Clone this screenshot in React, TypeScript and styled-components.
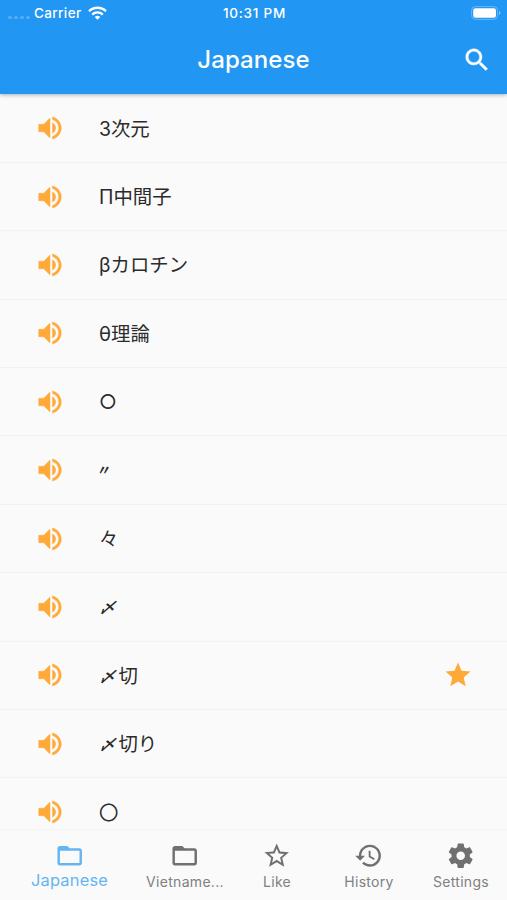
import React from "react";
import styled, { createGlobalStyle } from "styled-components";

const GlobalStyle = createGlobalStyle`
  * { box-sizing: border-box; }
  body { margin: 0; background: #fafafa; }
`;

const Screen = styled.div`
  display: flex;
  flex-direction: column;
  width: 507px;
  height: 900px;
  overflow: hidden;
  background: #fafafa;
  font-family: Inter, "Noto Sans CJK JP", sans-serif;
`;

const Header = styled.header`
  flex: none;
  height: 93.5px;
  background: #2196f3;
  color: #fff;
  box-shadow: 0 1px 4px rgba(0, 0, 0, 0.3);
  z-index: 1;
`;

const StatusBar = styled.div`
  display: grid;
  grid-template-columns: 1fr auto 1fr;
  align-items: center;
  height: 26px;
  padding: 0 6px 0 8px;
  font-size: 13.5px;
  font-weight: 500;
`;

const Carrier = styled.div`
  display: flex;
  align-items: center;
  letter-spacing: 0.38px;
  svg { display: block; }
`;

const Dots = styled.div`
  display: flex;
  gap: 2px;
  margin: 9px 4px 0 0;
`;

const Dot = styled.i`
  width: 4px;
  height: 3.5px;
  border-radius: 50%;
  background: #55aef6;
`;

const Wifi = styled.svg`
  margin-left: 6px;
`;

const Clock = styled.div`
  letter-spacing: 0.77px;
`;

const Battery = styled.svg`
  display: block;
  justify-self: end;
`;

const TitleBar = styled.div`
  display: grid;
  grid-template-columns: 1fr auto 1fr;
  align-items: center;
  height: 67px;
  padding: 0 15px;
`;

const Title = styled.h1`
  grid-column: 2;
  margin: 0;
  font-size: 24px;
  font-weight: 500;
  line-height: 30px;
  letter-spacing: 0.1px;
`;

const SearchButton = styled.button`
  display: flex;
  justify-self: end;
  padding: 0;
  border: 0;
  background: none;
  color: #fff;
`;

const List = styled.ul`
  flex: 1;
  min-height: 0;
  margin: 0;
  padding: 1px 0 0;
  overflow: hidden;
  list-style: none;
`;

const Row = styled.li`
  display: flex;
  align-items: center;
  height: 68.4px;
  padding: 0 34px 0 34.5px;
  border-bottom: 1px solid #f2f2f2;
  color: #ffa938;
`;

const Word = styled.span`
  flex: 1;
  margin-left: 34.5px;
  padding-top: 1px;
  font-size: 19.4px;
  line-height: 28px;
  color: #2b2b2b;
`;

const Mark = styled.span<{ $kind: "ditto" | "shime" }>`
  display: inline-block;
  ${(p) =>
    p.$kind === "ditto"
      ? "transform: translate(-4.5px, -1px) skewX(-6deg) scale(0.72, 0.7); font-weight: 700;"
      : "transform: skewX(-20deg) scale(0.82, 0.8); font-weight: 500;"}
`;

const NavBar = styled.nav`
  flex: none;
  display: grid;
  grid-template-columns: 139px repeat(4, 1fr);
  height: 71px;
  border-top: 1px solid #f5f5f5;
`;

const NavItem = styled.a<{ $active?: boolean }>`
  display: flex;
  flex-direction: column;
  align-items: center;
  padding-top: 11px;
  color: ${(p) => (p.$active ? "#64b5f0" : "#707070")};
`;

const NavLabel = styled.span<{ $active?: boolean }>`
  margin-top: ${(p) => (p.$active ? "0" : "1.6px")};
  font-size: ${(p) => (p.$active ? "16.4px" : "14px")};
  line-height: 20px;
  letter-spacing: ${(p) => (p.$active ? "0.2px" : "0.3px")};
  color: ${(p) => (p.$active ? "#64b5f0" : "#808080")};
`;

const Glyph = styled.svg<{ $weight: number }>`
  display: block;
  flex: none;
  fill: currentColor;
  stroke: currentColor;
  stroke-width: ${(p) => p.$weight};
`;

const paths = {
  volume:
    "M3 9v6h4l5 5V4L7 9H3zm13.5 3c0-1.77-1.02-3.29-2.5-4.03v8.05c1.48-.73 2.5-2.25 2.5-4.02zM14 3.23v2.06c2.89.86 5 3.54 5 6.71s-2.11 5.85-5 6.71v2.06c4.01-.91 7-4.49 7-8.77s-2.99-7.86-7-8.77z",
  star: "M12 17.27L18.18 21l-1.64-7.03L22 9.24l-7.19-.61L12 2 9.19 8.63 2 9.24l5.46 4.73L5.82 21z",
  search:
    "M15.5 14h-.79l-.28-.27C15.41 12.59 16 11.11 16 9.5 16 5.91 13.09 3 9.5 3S3 5.91 3 9.5 5.91 16 9.5 16c1.61 0 3.09-.59 4.23-1.57l.27.28v.79l5 4.99L20.49 19l-4.99-5zm-6 0C7.01 14 5 11.99 5 9.5S7.01 5 9.5 5 14 7.01 14 9.5 11.99 14 9.5 14z",
  folder:
    "M20 6h-8l-2-2H4c-1.1 0-1.99.9-1.99 2L2 18c0 1.1.9 2 2 2h16c1.1 0 2-.9 2-2V8c0-1.1-.9-2-2-2zm0 12H4V8h16v10z",
  like: "M22 9.24l-7.19-.62L12 2 9.19 8.63 2 9.24l5.46 4.73L5.82 21 12 17.27 18.18 21l-1.63-7.03L22 9.24zM12 15.4l-3.76 2.27 1-4.28-3.32-2.88 4.38-.38L12 6.1l1.71 4.04 4.38.38-3.32 2.88 1 4.28L12 15.4z",
  history:
    "M13 3c-4.97 0-9 4.03-9 9H1l3.89 3.89.07.14L9 12H6c0-3.87 3.13-7 7-7s7 3.13 7 7-3.13 7-7 7c-1.93 0-3.68-.79-4.94-2.06l-1.42 1.42C8.27 19.99 10.51 21 13 21c4.97 0 9-4.03 9-9s-4.03-9-9-9zm-1 5v5l4.28 2.54.72-1.21-3.5-2.08V8H12z",
  settings:
    "M19.43 12.98c.04-.32.07-.64.07-.98s-.03-.66-.07-.98l2.11-1.65c.19-.15.24-.42.12-.64l-2-3.46c-.12-.22-.39-.3-.61-.22l-2.49 1c-.52-.4-1.08-.73-1.69-.98l-.38-2.65C14.46 2.18 14.25 2 14 2h-4c-.25 0-.46.18-.49.42l-.38 2.65c-.61.25-1.17.59-1.69.98l-2.49-1c-.23-.09-.49 0-.61.22l-2 3.46c-.13.22-.07.49.12.64l2.11 1.65c-.04.32-.07.65-.07.98s.03.66.07.98l-2.11 1.65c-.19.15-.24.42-.12.64l2 3.46c.12.22.39.3.61.22l2.49-1c.52.4 1.08.73 1.69.98l.38 2.65c.03.24.24.42.49.42h4c.25 0 .46-.18.49-.42l.38-2.65c.61-.25 1.17-.59 1.69-.98l2.49 1c.23.09.49 0 .61-.22l2-3.46c.12-.22.07-.49-.12-.64l-2.11-1.65zM12 15.5c-1.93 0-3.5-1.57-3.5-3.5s1.57-3.5 3.5-3.5 3.5 1.57 3.5 3.5-1.57 3.5-3.5 3.5z",
};

type IconName = keyof typeof paths;

const Icon = ({ name, size = 30, weight = 0 }: { name: IconName; size?: number; weight?: number }) => (
  <Glyph width={size} height={size} $weight={weight} viewBox="0 0 24 24" aria-hidden>
    <path d={paths[name]} />
  </Glyph>
);

const words: { text: string; liked?: boolean }[] = [
  { text: "3次元" },
  { text: "Π中間子" },
  { text: "βカロチン" },
  { text: "θ理論" },
  { text: "○" },
  { text: "〃" },
  { text: "々" },
  { text: "〆" },
  { text: "〆切", liked: true },
  { text: "〆切り" },
  { text: "〇" },
];

// The iteration and closing marks are set smaller and more slanted than the kanji.
const renderWord = (text: string) => {
  if (text[0] === "〃") return <Mark $kind="ditto">{text}</Mark>;
  if (text[0] === "〆")
    return (
      <>
        <Mark $kind="shime">〆</Mark>
        {text.slice(1)}
      </>
    );
  return text;
};

const tabs: { label: string; icon: IconName; active?: boolean }[] = [
  { label: "Japanese", icon: "folder", active: true },
  { label: "Vietname...", icon: "folder" },
  { label: "Like", icon: "like" },
  { label: "History", icon: "history" },
  { label: "Settings", icon: "settings" },
];

export default function App() {
  return (
    <Screen>
      <GlobalStyle />
      <Header>
        <StatusBar>
          <Carrier>
            <Dots>
              <Dot />
              <Dot />
              <Dot />
              <Dot />
            </Dots>
            Carrier
            <Wifi width="19" height="14" viewBox="0 0 19 14" fill="none" stroke="#fff" strokeWidth="2.3">
              <path d="M1 5.2a12.2 12.2 0 0 1 17 0" />
              <path d="M4.2 8.6a7.6 7.6 0 0 1 10.6 0" />
              <path d="M9.5 13.8L6.7 11a4 4 0 0 1 5.6 0z" fill="#fff" stroke="none" />
            </Wifi>
          </Carrier>
          <Clock>10:31 PM</Clock>
          <Battery width="30" height="14" viewBox="0 0 30 14">
            <rect x="0.6" y="0.6" width="26" height="12.8" rx="3.8" fill="none" stroke="#6bb8f7" strokeWidth="1" />
            <rect x="2.2" y="2.2" width="22.8" height="9.6" rx="2.2" fill="#fff" />
            <path d="M28 5v4c1-.3 1.5-1.1 1.5-2s-.5-1.7-1.5-2z" fill="#7cc0f8" />
          </Battery>
        </StatusBar>
        <TitleBar>
          <Title>Japanese</Title>
          <SearchButton aria-label="Search">
            <Icon name="search" weight={0.3} />
          </SearchButton>
        </TitleBar>
      </Header>
      <List>
        {words.map((w) => (
          <Row key={w.text}>
            <Icon name="volume" weight={0.35} />
            <Word lang="ja">{renderWord(w.text)}</Word>
            {w.liked && <Icon name="star" />}
          </Row>
        ))}
      </List>
      <NavBar>
        {tabs.map((t) => (
          <NavItem key={t.label} $active={t.active}>
            <Icon name={t.icon} size={29.4} />
            <NavLabel $active={t.active}>{t.label}</NavLabel>
          </NavItem>
        ))}
      </NavBar>
    </Screen>
  );
}
